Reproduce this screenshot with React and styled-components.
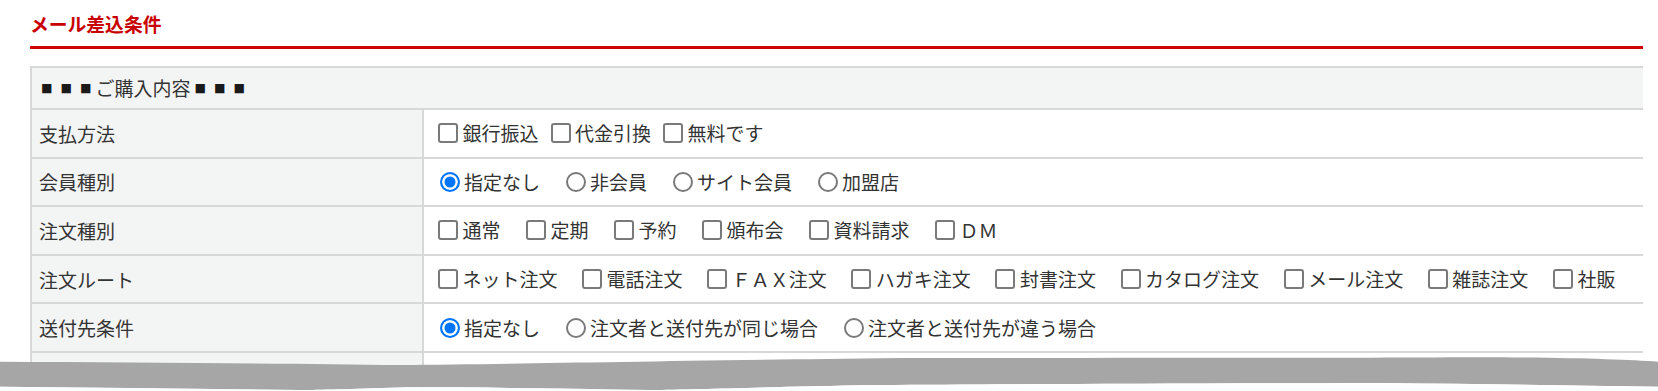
import React from "react";
import styled, { createGlobalStyle } from "styled-components";

const GlobalStyle = createGlobalStyle`
  body {
    margin: 0;
    background: #fff;
    font-family: "Noto Sans CJK JP", "Noto Sans", sans-serif;
    color: #333;
  }
`;

const Page = styled.div`
  position: relative;
  height: 391px;
  overflow: hidden;
  padding: 0 15px 0 30px;
`;

const Heading = styled.h2`
  margin: 0;
  padding-top: 2px;
  line-height: 44px;
  font-size: 18.8px;
  font-weight: bold;
  color: #c90000;
  border-bottom: 3px solid #d00000;
`;

const Table = styled.div`
  margin-top: 17px;
  border-top: 2px solid #d8d8d8;
  border-left: 2px solid #d8d8d8;
`;

const HeaderRow = styled.div`
  box-sizing: border-box;
  height: 42px;
  display: flex;
  align-items: center;
  padding-left: 5px;
  background: #f3f4f4;
  border-bottom: 2px solid #d8d8d8;
  font-size: 19px;
  line-height: 40px;
`;

const Bullet = styled.span`
  display: inline-block;
  width: 19.5px;
  text-align: center;
  font-size: 11.5px;
  color: #1a1a1a;
  vertical-align: 0.3em;
`;

const Row = styled.div`
  box-sizing: border-box;
  height: 48.6px;
  display: grid;
  grid-template-columns: 392px 1fr;
  border-bottom: 2px solid #d8d8d8;
`;

const Label = styled.div`
  display: flex;
  align-items: center;
  padding-left: 7px;
  background: #f3f4f4;
  border-right: 2px solid #d8d8d8;
  font-size: 19px;
`;

const Options = styled.div`
  display: flex;
  align-items: center;
  padding-left: 14px;
  background: #fff;
  white-space: nowrap;
`;

const Option = styled.label`
  display: inline-flex;
  align-items: center;
  margin-right: ${({ $spacing }) => $spacing}px;
  font-size: 19px;
  line-height: 26px;
`;

const CheckBox = styled.input.attrs({ type: "checkbox" })`
  appearance: none;
  box-sizing: border-box;
  width: 20px;
  height: 20px;
  margin: 0 4.5px 0 0;
  border: 2px solid #7a7a7a;
  border-radius: 3px;
  background: #fff;
`;

const Radio = styled.input.attrs({ type: "radio" })`
  appearance: none;
  box-sizing: border-box;
  width: 20px;
  height: 20px;
  margin: 0 4.5px 0 1.5px;
  border: 2px solid #7a7a7a;
  border-radius: 50%;
  background: #fff;
  &:checked {
    border-color: #0075ff;
    background: #0075ff;
    box-shadow: inset 0 0 0 2.5px #fff;
  }
`;

const TornEdge = styled.svg`
  position: absolute;
  left: 0;
  top: 350px;
  width: 1658px;
  height: 41px;
`;

const rows = [
  { label: "支払方法", type: "checkbox", spacing: 12, options: ["銀行振込", "代金引換", "無料です"] },
  { label: "会員種別", type: "radio", spacing: 24, options: ["指定なし", "非会員", "サイト会員", "加盟店"] },
  { label: "注文種別", type: "checkbox", spacing: 25.5, options: ["通常", "定期", "予約", "頒布会", "資料請求", "ＤＭ"] },
  {
    label: "注文ルート",
    type: "checkbox",
    spacing: 24.6,
    options: ["ネット注文", "電話注文", "ＦＡＸ注文", "ハガキ注文", "封書注文", "カタログ注文", "メール注文", "雑誌注文", "社販"],
  },
  { label: "送付先条件", type: "radio", spacing: 24, options: ["指定なし", "注文者と送付先が同じ場合", "注文者と送付先が違う場合"] },
  { label: "", type: "checkbox", spacing: 0, options: [] },
];

const App = () => {
  return (
    <Page>
      <GlobalStyle />
      <Heading>メール差込条件</Heading>
      <Table>
        <HeaderRow>
          <Bullet>■</Bullet>
          <Bullet>■</Bullet>
          <Bullet>■</Bullet>
          ご購入内容
          <Bullet>■</Bullet>
          <Bullet>■</Bullet>
          <Bullet>■</Bullet>
        </HeaderRow>
        {rows.map((row, i) => (
          <Row key={i}>
            <Label>{row.label}</Label>
            <Options>
              {row.options.map((opt, j) => (
                <Option key={opt} $spacing={row.spacing}>
                  {row.type === "radio" ? (
                    <Radio name={`r${i}`} defaultChecked={j === 0} />
                  ) : (
                    <CheckBox />
                  )}
                  {opt}
                </Option>
              ))}
            </Options>
          </Row>
        ))}
      </Table>
      <TornEdge viewBox="0 0 1658 41">
        <path
          d="M0 11.7 C150 12.5 300 13.5 400 15 C520 14 650 11 900 8 C1100 8 1300 8 1420 7.5 C1550 6.5 1620 9 1658 11.7 L1658 36.7 C1560 35.5 1480 34 1380 33 C1200 33.5 1000 34 880 35 C760 37 700 39.5 650 40 C520 38 450 37 400 37.5 C350 39 320 40 300 40 C200 39 100 37.5 0 36.7 Z"
          fill="#a6a6a6"
        />
        <path
          d="M0 36.7 C100 37.5 200 39 300 40 C320 40 350 39 400 37.5 C450 37 520 38 650 40 C700 39.5 760 37 880 35 C1000 34 1200 33.5 1380 33 C1480 34 1560 35.5 1658 36.7 L1658 41 L0 41 Z"
          fill="#fff"
        />
      </TornEdge>
    </Page>
  );
};

export default App;
